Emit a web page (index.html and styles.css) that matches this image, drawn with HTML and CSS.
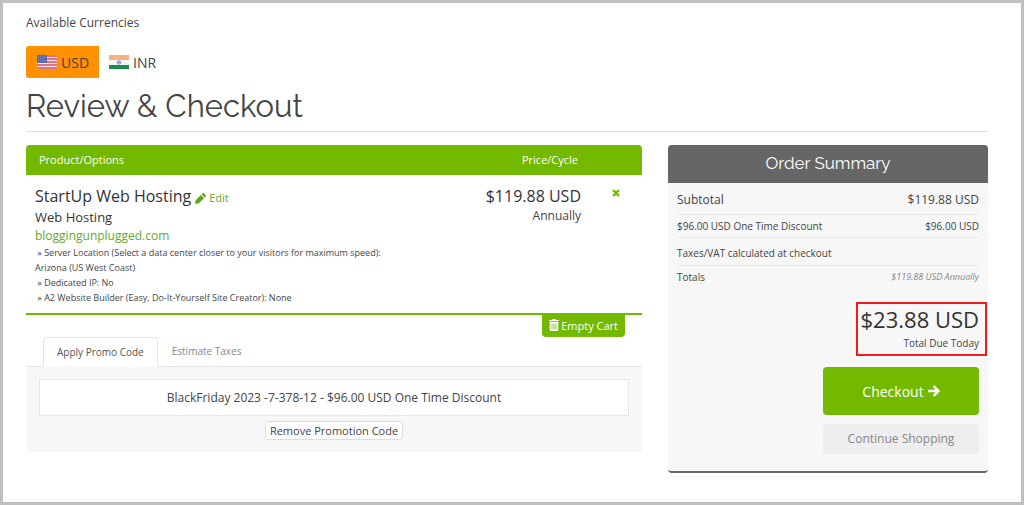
FILE: index.html
```html
<!DOCTYPE html>
<html lang="en">
<head>
    <meta charset="UTF-8">
    <meta name="viewport" content="width=device-width, initial-scale=1">
    <title>Review &amp; Checkout</title>
    <link rel="stylesheet" href="styles.css">
</head>
<body>
<div class="page">
    <p class="currency-title">Available Currencies</p>
    <nav class="currency-list">
        <a href="#usd" class="currency active">
            <svg class="flag" viewBox="0 0 20 14" aria-hidden="true">
                <rect width="20" height="14" fill="#f3e4e8"/>
                <path d="M0 1h20M0 4h20M0 7h20M0 10h20M0 13h20" stroke="#dc4a5e" stroke-width="1.6"/>
                <rect width="10" height="8" fill="#5a66ae"/>
                <path d="M1 2h8M1 4h8M1 6h8" stroke="#7f88c4" stroke-width="1" stroke-dasharray="1 1"/>
            </svg>
            USD
        </a>
        <a href="#inr" class="currency">
            <svg class="flag" viewBox="0 0 20 14" aria-hidden="true">
                <rect width="20" height="14" fill="#f4f4f4"/>
                <rect width="20" height="5" fill="#f9b182"/>
                <rect y="10" width="20" height="4" fill="#1d8a50"/>
                <circle cx="10" cy="7.5" r="1.8" fill="#9aaee0" stroke="#6d86cd" stroke-width=".6"/>
            </svg>
            INR
        </a>
    </nav>
    <h1>Review &amp; Checkout</h1>

    <div class="columns">
        <main>
            <table class="cart">
                <thead>
                <tr>
                    <th class="product">Product/Options</th>
                    <th class="price">Price/Cycle</th>
                    <th class="remove"></th>
                </tr>
                </thead>
                <tbody>
                <tr>
                    <td class="product">
                        <div class="item-title">
                            StartUp Web Hosting
                            <a href="#edit" class="edit">
                                <svg class="icon-pencil" viewBox="0 0 12 12" aria-hidden="true">
                                    <path d="M0 12l.8-4.2L6.4 2.2l3.4 3.4-5.6 5.6zM7.2 1.4L8.2.4q.7-.7 1.4 0l2 2q.7.7 0 1.4l-1 1z" fill="currentColor"/>
                                </svg>
                                Edit</a>
                        </div>
                        <div class="item-group">Web Hosting</div>
                        <div class="item-domain"><a href="#domain">bloggingunplugged.com</a></div>
                        <div class="item-options">
                            &nbsp;» Server Location (Select a data center closer to your visitors for maximum speed):<br>
                            Arizona (US West Coast)<br>
                            &nbsp;» Dedicated IP: No<br>
                            &nbsp;» A2 Website Builder (Easy, Do-It-Yourself Site Creator): None
                        </div>
                    </td>
                    <td class="price">
                        <div class="item-price">$119.88 USD</div>
                        <div class="item-cycle">Annually</div>
                    </td>
                    <td class="remove">
                        <button type="button" class="btn-remove" aria-label="Remove">
                            <svg viewBox="0 0 8 8" aria-hidden="true">
                                <path d="M1 1l6 6M7 1L1 7" stroke="currentColor" stroke-width="2.4"/>
                            </svg>
                        </button>
                    </td>
                </tr>
                </tbody>
            </table>
            <div class="empty-cart">
                <button type="button" class="btn-empty">
                    <svg class="icon-trash" viewBox="0 0 10 12" aria-hidden="true">
                        <path d="M0 1h3l.6-1h2.8L7 1h3v1.300H0z" fill="currentColor"/>
                        <path d="M.7 3h8.600v8q0 1-1 1H1.700q-1 0-1-1z" fill="currentColor"/>
                        <path d="M3 4.500v6M5 4.500v6M7 4.500v6" stroke="#73b900" stroke-width=".8"/>
                    </svg>
                    Empty Cart
                </button>
            </div>

            <div class="tabs">
                <button type="button" class="tab active">Apply Promo Code</button>
                <button type="button" class="tab">Estimate Taxes</button>
            </div>
            <div class="tab-content">
                <div class="promo">BlackFriday 2023 -7-378-12 - $96.00 USD One Time Discount</div>
                <button type="button" class="btn-promo">Remove Promotion Code</button>
            </div>
        </main>

        <aside class="summary">
            <h2>Order Summary</h2>
            <div class="summary-body">
                <table class="summary-table">
                    <tbody>
                    <tr class="subtotal">
                        <td>Subtotal</td>
                        <td>$119.88 USD</td>
                    </tr>
                    <tr class="discount">
                        <td>$96.00 USD One Time Discount</td>
                        <td>$96.00 USD</td>
                    </tr>
                    <tr class="taxes">
                        <td colspan="2">Taxes/VAT calculated at checkout</td>
                    </tr>
                    <tr class="totals">
                        <td>Totals</td>
                        <td class="recurring">$119.88 USD Annually</td>
                    </tr>
                    </tbody>
                </table>
                <div class="total-due">
                    <div class="amount">$23.88 USD</div>
                    <div class="caption">Total Due Today</div>
                </div>
                <div class="actions">
                    <button type="button" class="btn-checkout">
                        Checkout
                        <svg class="icon-arrow" viewBox="0 0 12 12" aria-hidden="true">
                            <path d="M0 6h10M5.500 1l5 5-5 5" fill="none" stroke="currentColor" stroke-width="2.4"/>
                        </svg>
                    </button>
                    <a href="#shop" class="btn-continue">Continue Shopping</a>
                </div>
            </div>
        </aside>
    </div>
</div>
</body>
</html>
```

FILE: styles.css
```css
* {
    box-sizing: border-box;
}

body {
    margin: 0;
    font-family: "Open Sans", "Noto Sans", sans-serif;
    font-size: 12px;
    color: #444;
    background-color: #fff;
}

a {
    color: #66a82a;
    text-decoration: none;
}

button {
    font-family: inherit;
    cursor: pointer;
}

.page {
    min-height: 100vh;
    padding: 10px 33px 29px 23px;
    border: 3px solid #bfbfbf;
}

.currency-title {
    margin: 0 0 13px;
    line-height: 20px;
}

.currency-list {
    display: flex;
}

.currency {
    display: flex;
    align-items: center;
    gap: 4px;
    height: 32px;
    padding: 0 10px;
    font-size: 14px;
    color: #444;
}

.currency.active {
    padding-left: 11px;
    background-color: #ff9000;
    border-radius: 3px 0 0 3px;
}

.flag {
    width: 20px;
    height: 14px;
}

h1 {
    margin: 0 0 13px;
    padding: 9px 0 6px;
    border-bottom: 1px solid #ddd;
    font-family: Raleway, Lato, sans-serif;
    font-size: 31px;
    font-weight: 400;
    line-height: 38px;
    color: #444;
}

.columns {
    display: grid;
    grid-template-columns: 1fr 320px;
    gap: 26px;
    align-items: start;
}

/* cart */
.cart {
    width: 100%;
    border-collapse: separate;
    border-spacing: 0;
    border-bottom: 2px solid #73b900;
}

.cart th {
    height: 30px;
    padding: 0 13px 2px;
    background-color: #73b900;
    color: #fff;
    font-size: 11px;
    font-weight: 400;
    text-align: left;
}

.cart th:first-child {
    border-radius: 4px 0 0 0;
}

.cart th:last-child {
    border-radius: 0 4px 0 0;
}

.cart td {
    padding: 11px 9px 8px;
    vertical-align: top;
}

.cart .price {
    width: 130px;
    text-align: right;
}

.cart th.price {
    padding-right: 12px;
}

.cart .remove {
    width: 52px;
}

.cart td.remove {
    padding: 12px 20px;
}

.item-title,
.item-price {
    font-size: 16px;
    line-height: 21px;
    color: #333;
}

.edit {
    font-size: 11px;
}

.icon-pencil {
    width: 11px;
    height: 11px;
    vertical-align: -2px;
    color: #58a618;
}

.item-group {
    font-size: 13px;
    line-height: 19px;
    color: #333;
}

.item-domain {
    font-size: 12px;
    line-height: 18px;
}

.item-cycle {
    font-size: 12px;
    line-height: 18px;
}

.item-options {
    font-size: 9px;
    line-height: 15px;
}

.btn-remove {
    display: block;
    padding: 2px;
    border: 0;
    background: none;
    color: #73b900;
}

.btn-remove svg {
    display: block;
    width: 8px;
    height: 8px;
}

.empty-cart {
    display: flex;
    justify-content: flex-end;
    padding-right: 17px;
}

.btn-empty {
    display: flex;
    align-items: center;
    gap: 2px;
    height: 22px;
    padding: 0 7px 2px;
    border: 0;
    border-radius: 0 0 4px 4px;
    background-color: #73b900;
    color: #fff;
    font-size: 11px;
}

.icon-trash {
    width: 10px;
    height: 12px;
}

/* promo code and taxes */
.tabs {
    display: flex;
    padding-left: 17px;
    border-bottom: 1px solid #e6e6e6;
}

.tab {
    height: 29px;
    padding: 0 13px 2px;
    border: 1px solid transparent;
    border-bottom: 0;
    background: none;
    color: #888;
    font-size: 10px;
}

.tab.active {
    margin-bottom: -1px;
    height: 30px;
    border-color: #e6e6e6;
    border-radius: 4px 4px 0 0;
    background-color: #fff;
    color: #555;
}

.tab-content {
    padding: 12px 13px;
    background-color: #f7f7f7;
    text-align: center;
}

.promo {
    margin-bottom: 5px;
    border: 1px dotted #d4d4d4;
    background-color: #fff;
    font-size: 12px;
    line-height: 35px;
}

.btn-promo {
    display: block;
    height: 19px;
    margin: 0 auto;
    padding: 0 4px;
    border: 1px solid #ddd;
    border-radius: 3px;
    background-color: #fff;
    color: #444;
    font-size: 11px;
    line-height: 16px;
}

/* order summary */
.summary {
    border-bottom: 2px solid #666;
    border-radius: 4px;
    background-color: #f7f7f7;
}

.summary h2 {
    margin: 0;
    padding-bottom: 1px;
    border-radius: 4px 4px 0 0;
    background-color: #666;
    color: #fff;
    font-family: Raleway, Lato, sans-serif;
    font-size: 17px;
    font-weight: 400;
    line-height: 37px;
    text-align: center;
}

.summary-body {
    padding: 3px 9px 17px;
}

.summary-table {
    width: 100%;
    border-collapse: collapse;
}

.summary-table td {
    height: 23px;
    padding: 0;
    border-bottom: 1px solid #e8e8e8;
    font-size: 10px;
}

.summary-table td:last-child:not(:first-child) {
    text-align: right;
}

.summary-table .subtotal td {
    height: 28px;
    font-size: 12px;
}

.summary-table .taxes td {
    height: 28px;
    padding-top: 4px;
}

.summary-table .totals td {
    border-bottom: 0;
}

.summary-table .recurring {
    color: #888;
    font-size: 9px;
    font-style: italic;
}

.total-due {
    width: fit-content;
    margin: 14px -8px 11px auto;
    padding: 0 6px 2px 3px;
    border: 2px solid #ee1c1c;
    text-align: right;
}

.amount {
    font-size: 22px;
    line-height: 30px;
    color: #333;
}

.caption {
    font-size: 10px;
    line-height: 18px;
}

.actions {
    display: flex;
    flex-direction: column;
    gap: 9px;
    width: 156px;
    margin-left: auto;
}

.btn-checkout {
    display: flex;
    align-items: center;
    justify-content: center;
    gap: 4px;
    height: 48px;
    border: 0;
    border-radius: 4px;
    background-color: #73b900;
    color: #fff;
    font-size: 14px;
}

.icon-arrow {
    width: 12px;
    height: 12px;
}

.btn-continue {
    border-radius: 3px;
    background-color: #eee;
    color: #888;
    font-size: 12px;
    line-height: 30px;
    text-align: center;
}
```
